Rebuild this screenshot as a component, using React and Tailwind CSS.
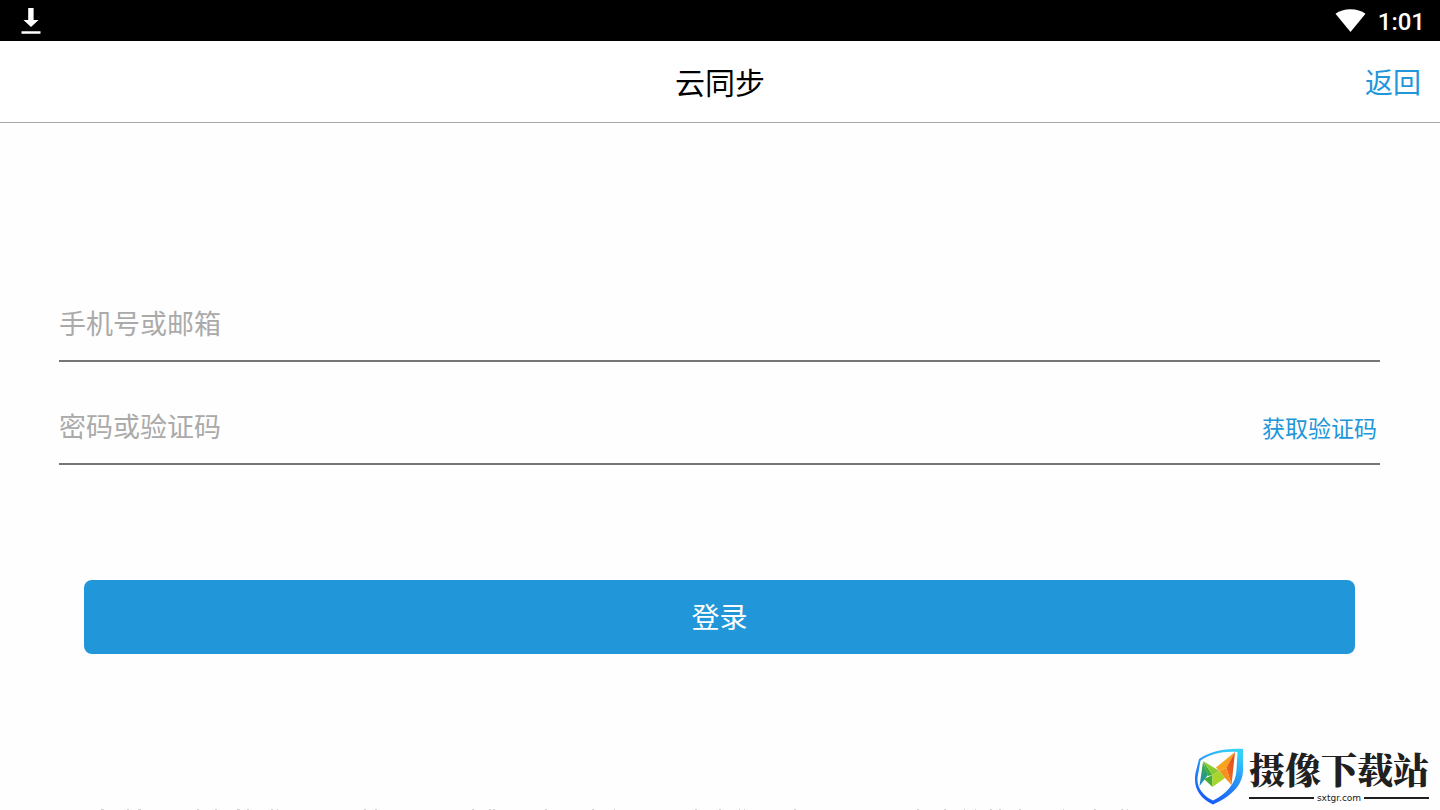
import React from "react";

const clippedNotice = [
  [101, 3], [127, 2], [138, 3], [197, 2], [215, 2], [237, 3], [247, 2], [271, 2], [277, 1],
  [364, 2], [375, 2], [472, 2], [489, 2], [493, 2], [545, 2], [592, 2], [614, 1], [695, 2],
  [719, 2], [739, 1], [744, 1], [794, 2], [917, 2], [944, 2], [964, 1], [975, 1], [990, 2],
  [999, 2], [1019, 2], [1063, 1], [1094, 2], [1121, 2], [1127, 1],
];

function StatusBar() {
  return (
    <div className="flex h-[41px] shrink-0 items-center justify-between bg-black pl-5 pr-[15px] text-white">
      <svg className="h-[26px] w-[22px]" viewBox="0 0 22 26" fill="currentColor" role="img" aria-label="下载">
        <path d="M8.2 0h5.4v12h5L11 19 3.5 12h4.7zM1.5 23.2h19v2.5h-19z" />
      </svg>
      <div className="flex items-center gap-3">
        <svg className="h-6 w-8" viewBox="0 0 32 24" fill="currentColor" role="img" aria-label="Wi-Fi">
          <path d="M16.5 23 1.5 4.700C5.500 1.700 10.500.2 16.500.2S27.500 1.700 31.500 4.700z" />
        </svg>
        <span className="pt-[3px] font-[Roboto,sans-serif] text-[24px] font-medium leading-8">1:01</span>
      </div>
    </div>
  );
}

function Shield() {
  return (
    <svg className="h-[57px] w-[50px]" viewBox="0 0 50 57" aria-hidden="true">
      <defs>
        <linearGradient id="rim" x1="0.75" y1="0" x2="0.3" y2="1">
          <stop offset="0" stopColor="#35d2f8" />
          <stop offset="0.5" stopColor="#278cf5" />
          <stop offset="1" stopColor="#1459fa" />
        </linearGradient>
        <linearGradient id="flame" x1="0.8" y1="0" x2="0.3" y2="1">
          <stop offset="0" stopColor="#e2461f" />
          <stop offset="1" stopColor="#f0701f" />
        </linearGradient>
        <linearGradient id="leaf" x1="0" y1="0" x2="0" y2="1">
          <stop offset="0" stopColor="#3fae3a" />
          <stop offset="0.45" stopColor="#2fa070" />
          <stop offset="1" stopColor="#1787d8" />
        </linearGradient>
      </defs>
      <path
        fill="url(#rim)"
        fillRule="evenodd"
        d="M5 11C15 4 30 0 49 1V23C48.500 38 36 49 19 56.500C5 50-1 39 1.500 25ZM6.500 12.500 4 27C1.500 38 8 47 19 52.500C32 46 42 36 42.500 22L43.500 4C28 3 16 6.500 6.500 12.500Z"
      />
      <path fill="url(#leaf)" d="M9 14 5.500 38 14 27z" />
      <path fill="#3fae3a" d="M9 13 14 28 18.500 27z" />
      <path fill="#8bcb32" d="M9 13 25.500 23 18.500 27z" />
      <path fill="#45ab35" d="M18.500 27 10 31 18.500 39z" />
      <path fill="#a9d52b" d="M18.500 27 25.500 23 31 30 18.500 39z" />
      <path fill="#f7a31e" d="M22 19.500 41 4 33 20 25 23z" />
      <path fill="url(#flame)" d="M41 4 32.500 20 37.500 37z" />
      <path fill="#f5921e" d="M25.500 23 32.500 20 37.500 37 31 30z" />
    </svg>
  );
}

function SiteBadge() {
  return (
    <div className="absolute bottom-[5px] right-[11px] flex items-center gap-[5px] text-[#202020]">
      <Shield />
      <div className="flex flex-col gap-1">
        <span className="whitespace-nowrap font-['Noto_Serif_CJK_SC','Noto_Sans_CJK_SC',serif] text-[36px] font-black leading-[38px]">
          摄像下载站
        </span>
        <div className="flex items-center gap-[3px]">
          <span className="h-[2px] flex-1 bg-[#202020]" />
          <span className="font-['DejaVu_Sans',sans-serif] text-[9px] leading-3">sxtgr.com</span>
          <span className="h-[2px] flex-1 bg-[#202020]" />
        </div>
      </div>
    </div>
  );
}

const field =
  "h-full w-full min-w-0 bg-transparent pb-[2px] text-[27px] text-black outline-none placeholder:text-[#aaaaaa] placeholder:opacity-100";

export default function App() {
  return (
    <div className="relative flex h-screen flex-col overflow-hidden bg-[#fefefe] font-['Noto_Sans_CJK_SC',sans-serif]">
      <StatusBar />
      <header className="grid h-[82px] shrink-0 grid-cols-[1fr_auto_1fr] items-center border-b border-[#aaaaaa] bg-white pb-[2px]">
        <h1 className="col-start-2 text-[30px] leading-10 text-black">云同步</h1>
        <button type="button" className="mr-[19px] justify-self-end text-[28px] leading-10 text-[#2196d9]">
          返回
        </button>
      </header>
      <main className="flex-1 pl-[59px] pr-[60px] pt-[164px]">
        <form onSubmit={(e) => e.preventDefault()}>
          <div className="flex flex-col gap-7">
            <div className="flex h-[75px] items-center border-b-2 border-[#767676]">
              <input aria-label="手机号或邮箱" placeholder="手机号或邮箱" type="text" className={field} />
            </div>
            <div className="flex h-[75px] items-center border-b-2 border-[#767676]">
              <input aria-label="密码或验证码" placeholder="密码或验证码" type="password" className={field} />
              <button type="button" className="mr-[3px] shrink-0 text-[23px] leading-8 text-[#2196d9]">
                获取验证码
              </button>
            </div>
          </div>
          <div className="px-[25px] pt-[115px]">
            <button type="submit" className="h-[74px] w-full rounded-lg bg-[#2196d9] pb-[2px] text-[28px] text-white">
              登录
            </button>
          </div>
        </form>
      </main>
      <svg className="h-px w-full shrink-0" viewBox="0 0 1440 1" preserveAspectRatio="none" fill="#d2d2d2" aria-hidden="true">
        {clippedNotice.map(([x, w]) => (
          <rect key={x} x={x} y="0" width={w} height="1" />
        ))}
      </svg>
      <SiteBadge />
    </div>
  );
}
